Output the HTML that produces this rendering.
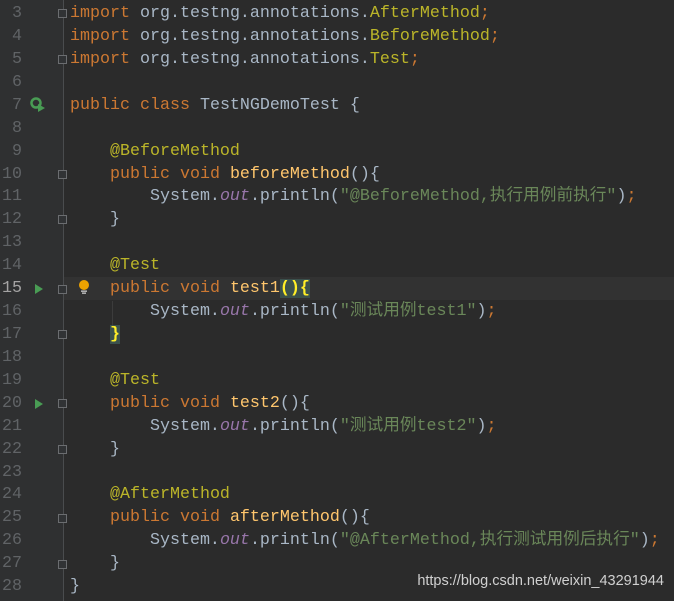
<!DOCTYPE html>
<html><head><meta charset="utf-8"><style>
body{margin:0;width:674px;height:601px;background:#2b2b2b;overflow:hidden;position:relative;font-family:"Liberation Mono","Noto Sans CJK SC",monospace;font-size:16.67px}
.g{position:absolute;left:0;top:0;width:63px;height:601px;background:#2f3031}
.sep{position:absolute;left:63px;top:0;width:1px;height:601px;background:#4a4c4e}
.r{position:absolute;left:0;height:23px;line-height:23px;white-space:pre;margin-top:1.5px}
.n{position:absolute;width:22px;text-align:right;color:#606366;left:0}
.c{position:absolute;left:70px;color:#a9b7c6}
.k{color:#cc7832}.a{color:#bbb529}.m{color:#ffc66d}.s{color:#6a8759}.o{color:#9876aa;font-style:italic}
.hl{position:absolute;left:64px;right:0;top:277px;height:23px;background:#323232}
.b{background:#3b514d;color:#ffef28;font-weight:bold}
.f{position:absolute;left:58px;width:9px;height:9px;border:1px solid #6b6d70;background:#313335;box-sizing:border-box}
.w{position:absolute;right:10px;top:573px;font-family:"Liberation Sans",sans-serif;font-size:14.5px;color:#d0d0d0}
</style></head><body>
<div class="g"></div><div class="hl"></div><div class="sep"></div>
<div style="position:absolute;left:112px;top:301px;width:1px;height:24px;background:#3c3c3c"></div>
<div class="r" style="top:0.5px"><span class="n">3</span><span class="c"><span class="k">import</span> org.testng.annotations.<span class="a">AfterMethod</span><span class="k">;</span></span></div>
<div class="r" style="top:23.4px"><span class="n">4</span><span class="c"><span class="k">import</span> org.testng.annotations.<span class="a">BeforeMethod</span><span class="k">;</span></span></div>
<div class="r" style="top:46.3px"><span class="n">5</span><span class="c"><span class="k">import</span> org.testng.annotations.<span class="a">Test</span><span class="k">;</span></span></div>
<div class="r" style="top:69.3px"><span class="n">6</span></div>
<div class="r" style="top:92.2px"><span class="n">7</span><span class="c"><span class="k">public class</span> TestNGDemoTest {</span></div>
<div class="r" style="top:115.1px"><span class="n">8</span></div>
<div class="r" style="top:138px"><span class="n">9</span><span class="c">    <span class="a">@BeforeMethod</span></span></div>
<div class="r" style="top:161px"><span class="n">10</span><span class="c">    <span class="k">public void</span> <span class="m">beforeMethod</span>(){</span></div>
<div class="r" style="top:183.9px"><span class="n">11</span><span class="c">        System.<span class="o">out</span>.println(<span class="s">"@BeforeMethod,执行用例前执行"</span>)<span class="k">;</span></span></div>
<div class="r" style="top:206.8px"><span class="n">12</span><span class="c">    }</span></div>
<div class="r" style="top:229.7px"><span class="n">13</span></div>
<div class="r" style="top:252.7px"><span class="n">14</span><span class="c">    <span class="a">@Test</span></span></div>
<div class="r" style="top:275.6px"><span class="n" style="color:#a4a3a3">15</span><span class="c">    <span class="k">public void</span> <span class="m">test1</span><span class="b">(){</span></span></div>
<div class="r" style="top:298.5px"><span class="n">16</span><span class="c">        System.<span class="o">out</span>.println(<span class="s">"测试用例test1"</span>)<span class="k">;</span></span></div>
<div class="r" style="top:321.4px"><span class="n">17</span><span class="c">    <span class="b">}</span></span></div>
<div class="r" style="top:344.4px"><span class="n">18</span></div>
<div class="r" style="top:367.3px"><span class="n">19</span><span class="c">    <span class="a">@Test</span></span></div>
<div class="r" style="top:390.2px"><span class="n">20</span><span class="c">    <span class="k">public void</span> <span class="m">test2</span>(){</span></div>
<div class="r" style="top:413.1px"><span class="n">21</span><span class="c">        System.<span class="o">out</span>.println(<span class="s">"测试用例test2"</span>)<span class="k">;</span></span></div>
<div class="r" style="top:436.1px"><span class="n">22</span><span class="c">    }</span></div>
<div class="r" style="top:459px"><span class="n">23</span></div>
<div class="r" style="top:481.9px"><span class="n">24</span><span class="c">    <span class="a">@AfterMethod</span></span></div>
<div class="r" style="top:504.8px"><span class="n">25</span><span class="c">    <span class="k">public void</span> <span class="m">afterMethod</span>(){</span></div>
<div class="r" style="top:527.8px"><span class="n">26</span><span class="c">        System.<span class="o">out</span>.println(<span class="s">"@AfterMethod,执行测试用例后执行"</span>)<span class="k">;</span></span></div>
<div class="r" style="top:550.7px"><span class="n">27</span><span class="c">    }</span></div>
<div class="r" style="top:573.6px"><span class="n">28</span><span class="c">}</span></div>
<div class="f" style="top:9px"></div><div class="f" style="top:55px"></div>
<div class="f" style="top:170px"></div><div class="f" style="top:215px"></div>
<div class="f" style="top:285px"></div><div class="f" style="top:330px"></div>
<div class="f" style="top:399px"></div><div class="f" style="top:445px"></div>
<div class="f" style="top:514px"></div><div class="f" style="top:560px"></div>
<svg style="position:absolute;left:30px;top:97px" width="16" height="16"><circle cx="6" cy="6" r="4.5" fill="none" stroke="#499c54" stroke-width="2.5"/><path d="M8 7 L15 11 L8 15Z" fill="#499c54"/></svg>
<svg style="position:absolute;left:34px;top:283px" width="10" height="12"><path d="M1 1 L9 6 L1 11Z" fill="#499c54"/></svg>
<svg style="position:absolute;left:34px;top:398px" width="10" height="12"><path d="M1 1 L9 6 L1 11Z" fill="#499c54"/></svg>
<svg style="position:absolute;left:78px;top:279px" width="12" height="16"><circle cx="6" cy="6" r="5" fill="#eda200"/><rect x="3" y="11.5" width="6" height="1.3" fill="#ccc"/><rect x="4" y="13.5" width="4" height="1.3" fill="#ccc"/></svg>
<div class="w">https://blog.csdn.net/weixin_43291944</div>
</body></html>
